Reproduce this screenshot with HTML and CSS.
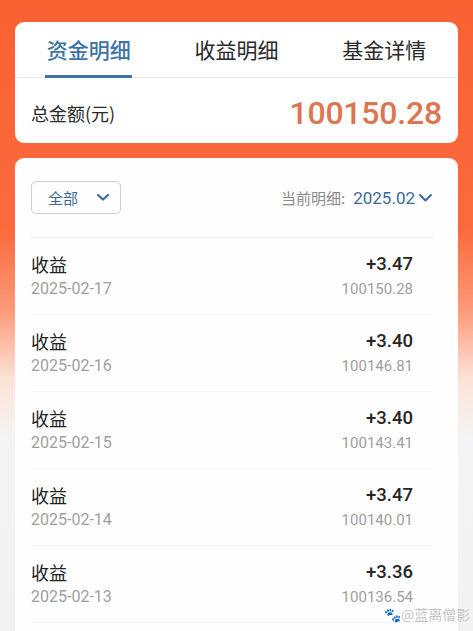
FILE: index.html
```html
<!DOCTYPE html>
<html lang="zh-CN">
  <head>
    <meta charset="UTF-8" />
    <meta name="viewport" content="width=device-width, initial-scale=1.0" />
    <title>资金明细</title>
    <link rel="stylesheet" href="styles.css">
  </head>
  <body>
    <div class="summary-card">
      <div class="tabs">
        <div class="tab active"><span>资金明细</span></div>
        <div class="tab"><span>收益明细</span></div>
        <div class="tab"><span>基金详情</span></div>
      </div>
      <div class="total">
        <span class="total-label">总金额(元)</span>
        <span class="total-value">100150.28</span>
      </div>
    </div>

    <div class="list-card">
      <div class="filter-row">
        <div class="filter-btn">
          <span>全部</span>
          <svg width="14" height="9" viewBox="0 0 14 9"><path d="M2 2l5 4.5L12 2" fill="none" stroke="#3d6a95" stroke-width="2.2" stroke-linecap="round" stroke-linejoin="round"/></svg>
        </div>
        <div class="month">
          <span class="month-label">当前明细:</span>
          <span class="month-value">2025.02</span>
          <svg width="15" height="10" viewBox="0 0 15 10"><path d="M2 2l5.5 5.5L13 2" fill="none" stroke="#3d6a95" stroke-width="2" stroke-linecap="round" stroke-linejoin="round"/></svg>
        </div>
      </div>

      <div class="rows">
        <div class="row">
          <div class="row-left"><div class="row-title">收益</div><div class="row-date">2025-02-17</div></div>
          <div class="row-right"><div class="row-amount">+3.47</div><div class="row-balance">100150.28</div></div>
        </div>
        <div class="row">
          <div class="row-left"><div class="row-title">收益</div><div class="row-date">2025-02-16</div></div>
          <div class="row-right"><div class="row-amount">+3.40</div><div class="row-balance">100146.81</div></div>
        </div>
        <div class="row">
          <div class="row-left"><div class="row-title">收益</div><div class="row-date">2025-02-15</div></div>
          <div class="row-right"><div class="row-amount">+3.40</div><div class="row-balance">100143.41</div></div>
        </div>
        <div class="row">
          <div class="row-left"><div class="row-title">收益</div><div class="row-date">2025-02-14</div></div>
          <div class="row-right"><div class="row-amount">+3.47</div><div class="row-balance">100140.01</div></div>
        </div>
        <div class="row">
          <div class="row-left"><div class="row-title">收益</div><div class="row-date">2025-02-13</div></div>
          <div class="row-right"><div class="row-amount">+3.36</div><div class="row-balance">100136.54</div></div>
        </div>
      </div>
    </div>

    <div class="watermark">&#x1F43E;@蓝离僧影</div>
  </body>
</html>
```

FILE: styles.css
```css
* {
  box-sizing: border-box;
}
html,
body {
  height: 100%;
}
body {
  margin: 0;
  padding: 22px 15px 0;
  overflow: hidden;
  font-family: Roboto, "Noto Sans CJK SC", sans-serif;
  color: #222;
  background: linear-gradient(
    to bottom,
    #fa6133 0,
    #fb6a3d 230px,
    #fc9a7a 310px,
    #fde3d9 380px,
    #f4f4f4 440px,
    #f2f2f2 100%
  );
}

/* top card */
.summary-card {
  background-color: #fff;
  border-radius: 9px;
  height: 121px;
}
.tabs {
  display: grid;
  grid-template-columns: 1fr 1fr 1fr;
  height: 56px;
  border-bottom: 1px solid #e6e6e6;
}
.tab {
  display: flex;
  justify-content: center;
  font-family: "Noto Sans CJK SC", sans-serif;
  font-size: 21px;
  color: #2a2a2a;
}
.tab span {
  padding-top: 12px;
  height: 56px;
  line-height: 30px;
}
.tab.active span {
  color: #3c72a8;
  font-weight: 500;
  width: 87px;
  text-align: center;
  border-bottom: 3px solid #3c72a8;
}
.total {
  display: flex;
  justify-content: space-between;
  align-items: center;
  height: 64px;
  padding: 6px 16px 0;
}
.total-label {
  font-family: "Noto Sans CJK SC", sans-serif;
  font-size: 18px;
  color: #2a2a2a;
}
.total-value {
  font-size: 32px;
  color: #db7650;
  font-weight: 500;
  letter-spacing: -0.2px;
}

/* list card */
.list-card {
  margin-top: 15px;
  background-color: #fefefe;
  border-radius: 9px 9px 0 0;
  padding: 0 25px 0 16px;
  height: 600px;
}
.filter-row {
  display: flex;
  justify-content: space-between;
  align-items: center;
  padding-top: 23px;
  padding-bottom: 23px;
  border-bottom: 1px solid #ececec;
}
.filter-btn {
  display: flex;
  align-items: center;
  gap: 18px;
  width: 90px;
  height: 33px;
  padding-left: 16px;
  border: 1px solid #cfcfcf;
  border-radius: 5px;
  font-family: "Noto Sans CJK SC", sans-serif;
  font-size: 15px;
  color: #3d6a95;
}
.month {
  display: flex;
  align-items: center;
  gap: 3px;
}
.month-label {
  font-family: "Noto Sans CJK SC", sans-serif;
  font-size: 15px;
  color: #8a8a8a;
  margin-right: 5px;
}
.month-value {
  font-size: 17px;
  color: #3d6a95;
}
.row {
  display: flex;
  justify-content: space-between;
  padding: 14px 20px 15px 0;
  border-bottom: 1px solid #f7f7f7;
}
.row-title {
  font-family: "Noto Sans CJK SC", sans-serif;
  font-size: 18px;
  line-height: 25px;
  color: #222;
}
.row-date,
.row-balance {
  font-size: 16px;
  line-height: 20px;
  margin-top: 2px;
  color: #9e9e9e;
}
.row-right {
  text-align: right;
}
.row-amount {
  font-size: 18.5px;
  font-weight: 500;
  line-height: 25px;
  color: #262626;
}
.row-balance {
  font-size: 15px;
}

.watermark {
  position: absolute;
  left: 384px;
  top: 604px;
  font-family: "Noto Sans CJK SC", sans-serif;
  font-size: 14px;
  color: #c4c4c4;
  text-shadow: 0 0 1px #fff;
}
```
